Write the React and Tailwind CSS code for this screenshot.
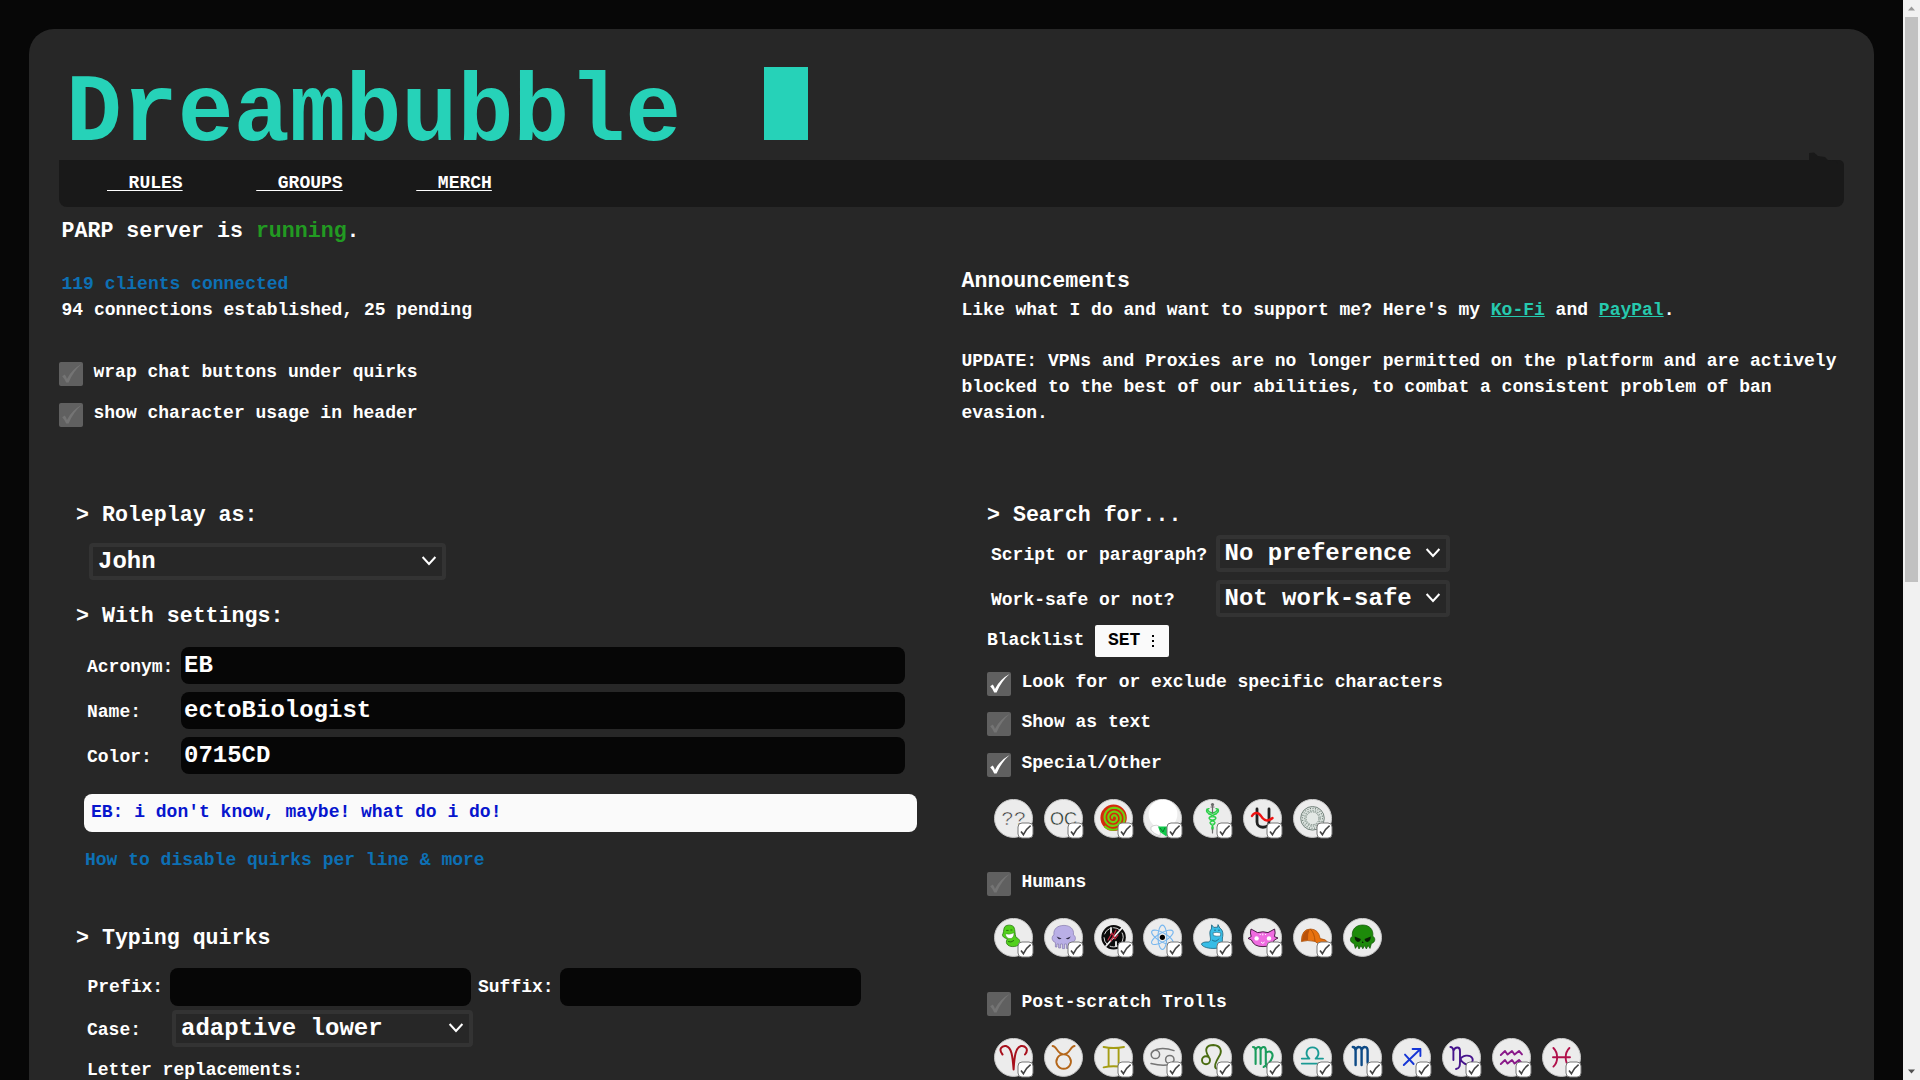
import React from "react";

const MONO = "font-['Liberation_Mono',monospace]";

function CheckMark({ on }) {
  return (
    <svg viewBox="0 0 24 24" className="size-6">
      <path
        d="M3.2 14.2 L5.8 12.6 Q7.2 14.6 7.9 17 Q12.8 7.2 22.6 2 Q14 9.5 9.6 20.6 L7.2 20.6 Q5.6 16.5 3.2 14.2Z"
        fill={on ? "#ffffff" : "#747474"}
      />
    </svg>
  );
}

function Check({ label, on = false, className = "" }) {
  return (
    <label className={`flex h-6 items-start ${className}`}>
      <span className="size-6 shrink-0 rounded-[2px] bg-[#606060]">
        <CheckMark on={on} />
      </span>
      <span className="-mt-[3px] ml-[10.5px] whitespace-pre text-[18px] leading-[26px]">{label}</span>
    </label>
  );
}

function Select({ value, className }) {
  return (
    <div
      className={`flex h-[37px] shrink-0 items-center justify-between rounded-[4px] border-4 border-[#333333] pl-[5px] pr-[5px] text-[24px] leading-[28px] ${className}`}
    >
      <span className="mt-px whitespace-pre">{value}</span>
      <svg viewBox="0 0 16 12" className="-mt-px h-3 w-4">
        <path d="M1.6 2 L8 9 L14.4 2" fill="none" stroke="#fff" strokeWidth="2" />
      </svg>
    </div>
  );
}

function Field({ label, value }) {
  return (
    <div className="mb-2 flex h-[37px] items-center">
      <span className="w-[94px] pt-[2px] text-[18px] leading-[26px]">{label}</span>
      <div className="flex h-[37px] w-[724px] items-center rounded-lg bg-[#060606] pl-[3px] text-[24px] leading-[28px]">
        {value}
      </div>
    </div>
  );
}

function Heading({ children }) {
  return <h2 className="h-[26px] whitespace-pre text-[21.6px] leading-[26px]">{children}</h2>;
}

const line = (color, d, w = 1.8) => <path d={d} fill="none" stroke={color} strokeWidth={w} strokeLinecap="round" strokeLinejoin="round" />;

const spiral = Array.from({ length: 90 }, (_, i) => {
  const a = (i / 89) * Math.PI * 6;
  const r = 1 + (i / 89) * 11.4;
  return `${(19.6 + r * Math.cos(a + 2.4)).toFixed(2)},${(18.8 + r * Math.sin(a + 2.4)).toFixed(2)}`;
}).join(" ");

const special = [
  <text x="19.8" y="26.4" textAnchor="middle" fontFamily="Liberation Mono" fontSize="21" fontWeight="400" fill="#2c2c2c" stroke="#ececec" strokeWidth=".6">??</text>,
  <text x="19.6" y="26" textAnchor="middle" fontFamily="Liberation Sans" fontSize="19" textLength="27" lengthAdjust="spacingAndGlyphs" fontWeight="400" fill="#14281c" stroke="#ececec" strokeWidth=".4">OC</text>,
  <g>
    <circle cx="19.6" cy="18.8" r="13.2" fill="#d42a0c" />
    <polyline points={spiral} fill="none" stroke="#6fd010" strokeWidth="2.1" />
  </g>,
  <g>
    <circle cx="20" cy="15" r="14.4" fill="#fff" />
    <path d="M8 28 Q14 24 18 29 L17 37 Q11 35 8 31Z" fill="#fff" stroke="#bbb" strokeWidth=".6" />
    <path d="M15 27.4 L28 27.4 L25.4 32 L23.4 37.4 L17 33Z" fill="#10c94a" />
    <path d="M17 29 L20 33 L22 28.5" fill="none" stroke="#087a2c" strokeWidth="1" />
  </g>,
  <g>
    {line("#27cf45", "M19.5 14 C14 13 14 9 16 9.6 M19.5 14 C25 13 25 9 23 9.6 M14 10 C12 13 16 15 22 18 C26 20 16 22 17 24 C18 26 22 27 19.5 31 M25 10 C27 13 23 15 17 18 C13 20 23 22 22 24 C21 26 17 27 19.5 31", 1.3)}
    {line("#27cf45", "M15.5 15 H23.5 M16.5 18 H22.5 M17 21 H22 M17.5 25 H21.5", 0.9)}
    {line("#6a6a6a", "M19.5 5 V14 M19.5 30 V34 M18 8 H21", 1.2)}
    <circle cx="19.5" cy="5.6" r="1.6" fill="#6a6a6a" />
  </g>,
  <g>
    {line("#222", "M14 10 V23 C14 30 26 30 26 23 V10", 2.8)}
    {line("#ee1212", "M9 17 C12 12 16 14 18 17 C21 22 25 23 29.5 19", 2.4)}
  </g>,
  <g fill="none" stroke="#66766f">
    <circle cx="19.5" cy="19.3" r="11.8" fill="#dbe2de" strokeWidth=".9" />
    <circle cx="19.5" cy="19.3" r="10" strokeWidth="1.1" strokeDasharray="1 1.6" />
    <circle cx="19.5" cy="19.3" r="7.8" stroke="#93a29b" strokeWidth="1.4" strokeDasharray="1.4 1.2" />
    <circle cx="19.5" cy="19.3" r="6.4" fill="#e3e8e5" strokeWidth=".8" strokeDasharray="1.5 1" />
  </g>,
];

const humans = [
  <g>
    <path d="M11 8.5 C13 6.6 18 6.6 19.8 9 C21.4 12 20.6 16 22 19.4 C25.6 20.6 27 24 24.6 27 C20 30 13 28.6 12.4 24.6 C12 22 14 21.6 12.4 20.4 C9 19.6 7.6 17 9 15.6 C10 13 9.4 10.4 11 8.5Z" fill="#52d01c" stroke="#287a10" strokeWidth=".8" />
    <path d="M11.4 15.8 Q16 17 20 14.8 Q20 20.5 16 20.6 Q12 20.4 11.4 15.8Z" fill="#fff" stroke="#287a10" strokeWidth=".4" />
    <path d="M12.2 12.4 H14.6 M16.4 12 H18.4 M14 23.5 Q17 25 20 22.4" fill="none" stroke="#226a0c" strokeWidth=".9" />
  </g>,
  <g>
    <path d="M11.4 24.5 C7 23 7.6 18 10 16.8 C9 10.6 14 7.4 20 7.4 C26 7.4 30.4 11 29.4 16.8 C32 18.2 32.6 23 28 24.5 V29.4 H26.2 V25.6 H24.4 V30.4 H22.4 V26 H20.6 V30.6 H18.4 V26 H16.6 V30 H14.6 V26 H13 V29 H11.4Z" fill="#b9afe6" stroke="#8479ae" strokeWidth=".7" />
    <path d="M12.6 18.6 L17.6 20.6 Q14.6 22.6 12.6 18.6Z M26.8 18.6 L21.8 20.6 Q24.8 22.6 26.8 18.6Z" fill="#34304c" />
  </g>,
  <g>
    <circle cx="19.6" cy="19.3" r="12.2" fill="#0b0b0b" />
    <circle cx="19.6" cy="19.3" r="9.6" fill="none" stroke="#f0f0f0" strokeWidth=".9" strokeDasharray="8 3" />
    {line("#f4f4f4", "M12 28 L28 10 M17 10 V15 M22 24 V28", 1.8)}
    {line("#c3273f", "M14 22 L18 15 L21 21 L24 17 M17 23 L22 12", 1.2)}
  </g>,
  <g fill="none" stroke="#77b7ef" strokeWidth="1.1">
    <ellipse cx="19.4" cy="19.3" rx="4.4" ry="12.2" />
    <ellipse cx="19.4" cy="19.3" rx="4.4" ry="12.2" transform="rotate(60 19.4 19.3)" />
    <ellipse cx="19.4" cy="19.3" rx="4.4" ry="12.2" transform="rotate(120 19.4 19.3)" />
    <circle cx="19.4" cy="19.3" r="2.6" fill="#000" stroke="none" />
  </g>,
  <g>
    <path d="M18.4 11 L18.6 6.8 L20.8 9.4 L24.6 9.2 L25 6.6 L26.8 10 C30 12 30.4 16 29.4 20 C29.6 25 28.6 29.6 24 30.2 C19 30.8 12 30.4 8.8 27 C7.6 25 11 23.6 15.4 24 C18.4 23 17.4 20 17 17 C16.6 14 17 12.2 18.4 11Z" fill="#38bde6" stroke="#18617c" strokeWidth=".8" />
    <path d="M20 14.8 Q24 13.8 27.8 15 L27.4 18 Q23.6 18.6 20.4 17.6Z" fill="#fff" stroke="#18617c" strokeWidth=".6" />
    <path d="M21 12.2 H23 M25 12.2 H27 M19 22 Q23 25 26 20.6" fill="none" stroke="#18617c" strokeWidth=".8" />
  </g>,
  <g>
    <path d="M8 11 L14.6 14.6 Q20 13 25 14.6 L31.6 11 Q32.8 15 31.4 18.6 L35 20 L31.4 22 Q29 28.8 20 28.6 Q11 28.8 8.4 22 L5 20.4 L8.2 18.6 Q6.8 15 8 11Z" fill="#ef6be0" stroke="#3a1036" strokeWidth=".9" />
    <circle cx="13.6" cy="20.4" r="2.2" fill="#fff" /><circle cx="26" cy="20.4" r="2.2" fill="#fff" />
    <path d="M18 24 L19.8 25.4 L21.6 24 M19.8 15.6 V17.4 M17.2 16 V17 M22.6 16 V17" fill="none" stroke="#fff" strokeWidth="1" />
  </g>,
  <g>
    <path d="M8.4 23.6 Q8.4 11 17.6 11 Q25.6 11.2 27.2 20.6 Q33 21 35 24.6 Q30 24 27 26 Q24 25.4 22 23.4 Q14 21.6 8.4 23.6Z" fill="#e8720f" stroke="#a34a06" strokeWidth=".7" />
    <path d="M9 23 Q9.2 13 16.6 11.6 Q14.4 16 15 22.2 Q11.4 22.2 9 23Z" fill="#b9520a" />
    {line("#a34a06", "M17.6 11.4 Q21.6 15 22 23", 0.8)}
  </g>,
  <g>
    <path d="M11 25.6 C6 24 7 19.6 9.4 18.2 C8.4 11.4 13 7 19.6 7 C26.2 7 30.8 11.4 29.8 18.2 C32.4 19.6 33 24 28.4 25.6 L27 30.4 L25 27.4 L23.4 31 L21.6 27.6 L19.8 30.8 L18 27.6 L16 31 L14.4 27.4 L12.4 30.4Z" fill="#1d8a0a" stroke="#0f5205" strokeWidth=".7" />
    <path d="M11.6 18.6 L17.8 21 Q17.4 24 14.8 24 Q11.8 23.4 11.6 18.6Z M27.8 18.6 L21.6 21 Q22 24 24.6 24 Q27.6 23.4 27.8 18.6Z M19.7 23 L18.8 25 H20.6Z" fill="#0a1f06" />
  </g>,
];

const trolls = [
  line("#a8101c", "M8.5 16.5 C4 11 8 7.4 12 8 C17.6 9.4 18.6 18 19.6 31.5 C20.4 18 21.6 9.4 27 8 C31 7.4 35.4 11 31 16.5", 2),
  line("#b4661a", "M8.6 8 C13 8 13 16.4 19.6 16.4 C26.2 16.4 26.2 8 30.6 8 M19.6 16.4 A7.2 7.2 0 1 0 19.7 16.4", 1.9),
  line("#a59d14", "M9.6 9 Q19.6 11 30 9 M9.6 29.4 Q19.6 27 30 29.4 M14.6 10 V28 M24.6 10 V28", 1.9),
  line("#757575", "M16.6 16.4 A4.2 4.2 0 1 1 8.2 16.4 A4.2 4.2 0 1 1 16.6 16.4 M8.2 15.6 C11 9.6 22 9.6 31 12.6 M31 21.6 A4.2 4.2 0 1 1 22.6 21.6 A4.2 4.2 0 1 1 31 21.6 M31 22.4 C28 28.6 17 27.8 8 25.6", 1.5),
  line("#4a6c12", "M17 22.2 A4 4 0 1 1 9 22.2 A4 4 0 1 1 17 22.2 M15.8 19 C10 10 15 7 20.4 7 C27.6 7.4 29.6 13 26 18.6 C23 23.6 20.8 27.6 22.6 30 C24.4 31.6 26.4 30.8 27.6 29", 1.9),
  line("#1a9c5c", "M10 9 C12.4 9 12.6 11 12.6 13 V26 M12.6 12 C14 8 17.6 8 17.6 12.6 V26 M17.6 12 C19 8 22.8 8 22.8 12.6 V25 C22.8 29 25 31 28 31 M22.8 15 C27 11.6 31 15 29 20 C27.6 24.4 23.6 27 20.6 29", 2.1),
  line("#1a9a94", "M8.8 25.6 H30 M8.8 20.6 H16.4 C11 16 14 9.4 19.5 9.4 C25 9.4 28 16 22.6 20.6 H30", 1.9),
  line("#0d4a86", "M9.8 9 C12 9 12.6 11 12.6 13 V27 M12.6 12 C14 8 18.6 8 18.6 12.6 V27 M18.6 12 C20 8 24.6 8 24.6 12.6 V24 C24.6 28 27 28.4 29.6 27", 2.4),
  line("#1636d6", "M11.8 27 L28.4 11 M20.6 11 H28.4 V18 M13 16.6 L21.6 26", 1.9),
  line("#46148c", "M8.4 9 C10.6 9 11.2 11 11.4 13 V22 M11.4 13 C13 8.4 18 8.4 18 13 V23 C18 28 18 30 14 31 M18 22 C20 17 28 16 30.4 20.4 C32 25 26 28 22.6 25.6 C20 24 18.6 22 18 20", 1.9),
  line("#8a1a8a", "M8.8 17 L13 13 L15.6 16.6 L20 13 L22.6 16.6 L27 13 L30 16.4 M8.8 26 L13 22 L15.6 25.6 L20 22 L22.6 25.6 L27 22 L30 25.4", 1.9),
  line("#b0104a", "M11.4 10 C16.4 15 16.4 24 11.4 28.6 M27.4 10 C22.4 15 22.4 24 27.4 28.6 M11 19.2 H28", 1.9),
];

function Icon({ art, badge = true }) {
  return (
    <div className="relative mr-[10.8px] size-[39px] shrink-0">
      <svg viewBox="0 0 39 39" className="size-[39px]">
        <circle cx="19.5" cy="19.4" r="19" fill="#ececec" stroke="#c6c6c6" strokeWidth="1" />
        {art}
      </svg>
      {badge && (
        <svg viewBox="0 0 17 17" className="absolute -bottom-[1px] -right-[1px] size-[17px]">
          <rect x="1" y="1" width="15" height="15" rx="4" fill="#fff" stroke="#777" strokeWidth="1" />
          <path d="M4 9.4 L6.4 12.6 Q9 7 13.6 3.6" fill="none" stroke="#444" strokeWidth="1.6" />
        </svg>
      )}
    </div>
  );
}

function IconRow({ items, plain = [], className = "" }) {
  return (
    <div className={`flex h-[39px] pl-[7px] ${className}`}>
      {items.map((art, i) => (
        <Icon key={i} art={art} badge={!plain.includes(i)} />
      ))}
    </div>
  );
}

function Logo() {
  return (
    <div className="flex h-[131px] items-start pl-[37px] pt-[38px]">
      <div className="h-[76px] w-[698px] pt-[7px]">
        <span className="block origin-top-left scale-y-[1.04] whitespace-pre text-[93.2px] font-bold leading-[76px] text-[#26d2b8]">
          Dreambubble
        </span>
      </div>
      <span className="h-[73px] w-[44px] bg-[#26d2b8]" />
    </div>
  );
}

function Nav() {
  return (
    <nav className="relative ml-[30px] flex h-[47px] w-[1785px] gap-[73.6px] rounded-b-[8px] rounded-tr-[5px] bg-[#191919] pl-12 pt-[10px] text-[18px] leading-[26px]">
      {["RULES", "GROUPS", "MERCH"].map((n) => (
        <a key={n} className="whitespace-pre underline decoration-1 underline-offset-2">
          {"  " + n}
        </a>
      ))}
      <svg viewBox="0 0 36 12" className="absolute -top-2 right-0 h-3 w-9">
        <path d="M1 9 V1 L6 .5 L10 4 L17 5 L20 8 L28 9 L30 12 H1Z" fill="#191919" />
      </svg>
    </nav>
  );
}

function Profile() {
  return (
    <section className="pl-[47px] pt-px">
      <Heading>{"> Roleplay as:"}</Heading>
      <Select value="John" className="ml-[13px] mt-[15px] w-[357px]" />
      <div className="mt-[23px]"><Heading>{"> With settings:"}</Heading></div>
      <div className="ml-[11px] mt-[18px]">
        <Field label="Acronym:" value="EB" />
        <Field label="Name:" value="ectoBiologist" />
        <Field label="Color:" value="0715CD" />
      </div>
      <div className="ml-[8px] mt-5 h-[38px] w-[833px] rounded-lg bg-[#fafafa] pl-[7px] pt-[5px] text-[18px] leading-[26px] text-[#0715cd]">
        EB: i don't know, maybe! what do i do!
      </div>
      <div className="ml-[9px] mt-[15px] h-[26px] text-[18px] leading-[26px] text-[#0d70b4]">
        How to disable quirks per line &amp; more
      </div>
      <div className="mt-[52px]"><Heading>{"> Typing quirks"}</Heading></div>
      <div className="ml-[11px] mt-[17px] flex h-[38px] items-center text-[18px] leading-[26px]">
        <span className="w-[83px] pl-[0.5px]">Prefix:</span>
        <span className="h-[38px] w-[301px] rounded-lg bg-[#060606]" />
        <span className="ml-[7px] w-[82px]">Suffix:</span>
        <span className="h-[38px] w-[301px] rounded-lg bg-[#060606]" />
      </div>
      <div className="ml-[11px] mt-1 flex h-[37px] items-center text-[18px] leading-[26px]">
        <span className="w-[85px] pt-[2px]">Case:</span>
        <Select value="adaptive lower" className="w-[301px]" />
      </div>
      <div className="ml-[11px] mt-[10px] text-[18px] leading-[26px]">Letter replacements:</div>
    </section>
  );
}

function Search() {
  return (
    <section className="pl-[10px] pt-px">
      <Heading>{"> Search for..."}</Heading>
      <div className="ml-1 mt-[7px] flex h-[37px] items-center text-[18px] leading-[26px]">
        <span className="w-[224.5px] pt-[2px]">Script or paragraph?</span>
        <Select value="No preference" className="w-[234px]" />
      </div>
      <div className="ml-1 mt-2 flex h-[37px] items-center text-[18px] leading-[26px]">
        <span className="w-[224.5px] pt-[2px]">Work-safe or not?</span>
        <Select value="Not work-safe" className="w-[234px]" />
      </div>
      <div className="mt-2 flex h-8 text-[18px] leading-[26px]">
        <span className="w-[108px] pt-[2px]">Blacklist</span>
        <button className="flex h-8 w-[74px] items-start whitespace-pre rounded-[2px] bg-[#fafafa] pl-[13px] pt-[2px] text-black">
          SET
          <span className="ml-[12px] mt-[8px] flex flex-col gap-[3px]">
            <i className="size-[2px] bg-black" />
            <i className="size-[2px] bg-black" />
            <i className="size-[2px] bg-black" />
          </span>
        </button>
      </div>
      <Check on label="Look for or exclude specific characters" className="mt-[15px]" />
      <Check label="Show as text" className="mt-4" />
      <Check on label="Special/Other" className="mt-[17px]" />
      <IconRow items={special} className="mt-[21.5px]" />
      <Check label="Humans" className="mt-[34.5px]" />
      <IconRow items={humans} plain={[7]} className="mt-[22px]" />
      <Check label="Post-scratch Trolls" className="mt-[35px]" />
      <IconRow items={trolls} plain={[1]} className="mt-[22px]" />
    </section>
  );
}

function Scrollbar() {
  return (
    <aside className="flex h-full w-[17px] shrink-0 flex-col items-center bg-[#f1f1f1]">
      <svg viewBox="0 0 17 17" className="size-[17px] shrink-0"><path d="M5 10.6 L8.5 6.6 L12 10.6Z" fill="#9a9a9a" /></svg>
      <div className="h-[565px] w-[13px] bg-[#c1c1c1]" />
      <svg viewBox="0 0 17 17" className="mt-auto size-[17px] shrink-0"><path d="M5 6.6 L8.5 10.6 L12 6.6Z" fill="#505050" /></svg>
    </aside>
  );
}

export default function App() {
  return (
    <div className={`flex h-[1080px] w-[1920px] overflow-hidden bg-[#070707] font-bold text-white ${MONO}`}>
      <div className="h-full flex-1 overflow-hidden pl-[29px] pt-[29px]">
        <main className="h-[1300px] w-[1845px] rounded-t-[25px] bg-[#272727]">
          <Logo />
          <Nav />
          <div className="ml-[32.5px] mt-[11px] h-[26px] text-[21.6px] leading-[26px]">
            PARP server is <span className="text-[#229a22]">running</span>.
          </div>
          <div className="flex h-[257px]">
            <div className="w-[903px] pl-[30px] pt-[27px]">
              <div className="pl-[2.5px] text-[18px] leading-[26px]">
                <div className="text-[#0d70b4]">119 clients connected</div>
                <div>94 connections established, 25 pending</div>
              </div>
              <Check label="wrap chat buttons under quirks" className="mt-[39px]" />
              <Check label="show character usage in header" className="mt-[17px]" />
            </div>
            <div className="w-[912px] pl-[29.5px] pt-6 text-[18px] leading-[26px]">
              <h3 className="h-[29px] text-[21.6px] leading-[26px]">Announcements</h3>
              <p>
                Like what I do and want to support me? Here's my <a className="text-[#26c9ae] underline">Ko-Fi</a> and{" "}
                <a className="text-[#26c9ae] underline">PayPal</a>.
              </p>
              <p className="mt-[25px] whitespace-nowrap">
                UPDATE: VPNs and Proxies are no longer permitted on the platform and are actively
                <br />
                blocked to the best of our abilities, to combat a consistent problem of ban
                <br />
                evasion.
              </p>
            </div>
          </div>
          <div className="grid grid-cols-[948px_1fr]">
            <Profile />
            <Search />
          </div>
        </main>
      </div>
      <Scrollbar />
    </div>
  );
}
